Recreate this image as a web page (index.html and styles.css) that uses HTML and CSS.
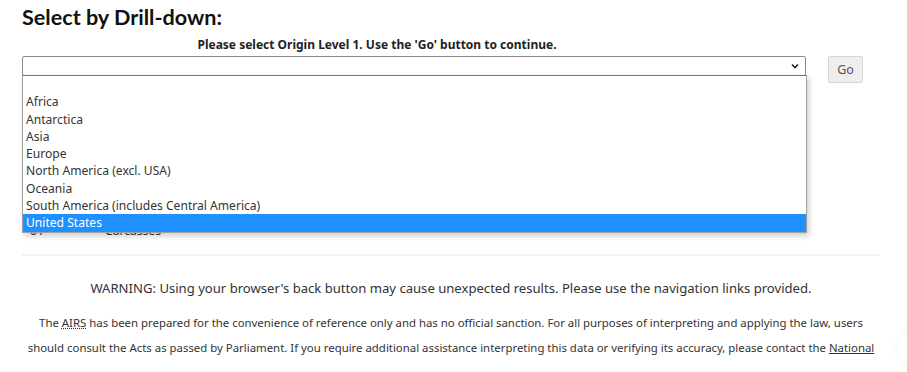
FILE: index.html
```html
<html>
 <head>
  <title>Select by Drill-down</title>
  <meta name='viewport' content='width=device-width,initial-scale=1.0'>
  <link rel="stylesheet" href="styles.css">
 </head>
 <body>
  <div class='page'>
   <h2 class='title'>Select by Drill-down:</h2>
   <p class='prompt'>Please select Origin Level 1. Use the 'Go' button to continue.</p>
   <div class='pick'>
    <div class='select'>
     <svg class='chev' width='8' height='6' viewBox='0 0 8 6'><polyline points='1,1.5 4,4.5 7,1.5' fill='none' stroke='#222' stroke-width='1.6'/></svg>
     <ul class='list'>
      <li>&nbsp;</li>
      <li>Africa</li>
      <li>Antarctica</li>
      <li>Asia</li>
      <li>Europe</li>
      <li>North America (excl. USA)</li>
      <li>Oceania</li>
      <li>South America (includes Central America)</li>
      <li class='sel'>United States</li>
     </ul>
    </div>
    <button class='go'>Go</button>
   </div>
   <div class='codes'>
    <div class='row'><span class='code'>01</span><span>Carcasses</span></div>
   </div>
   <hr class='rule'>
   <p class='warn'>WARNING: Using your browser's back button may cause unexpected results. Please use the navigation links provided.</p>
   <p class='note'>The <abbr title='Automated Import Reference System'>AIRS</abbr> has been prepared for the convenience of reference only and has no official sanction. For all purposes of interpreting and applying the law, users should consult the Acts as passed by Parliament. If you require additional assistance interpreting this data or verifying its accuracy, please contact the <a href='#'>National</a></p>
  </div>
  <div class='totop'></div>
 </body>
</html>
```

FILE: styles.css
```css
body {margin:0; background:#fff; color:#333; font-family:"Noto Sans","Open Sans",sans-serif}
.page {padding:0 27px 0 22px}
.title {margin:0; padding:5px 0 0; font-family:Lato,sans-serif; font-size:21.6px; line-height:24px; font-weight:bold; color:#111}
.prompt {width:710px; margin:8px 0 3px; text-align:center; font-size:12px; line-height:16px; font-weight:bold; color:#222}
.pick {display:flex; align-items:flex-start; gap:22px}
.select {position:relative; width:782px; height:18px; border:1px solid #8a8a8a; border-radius:2px; background:#fff}
.chev {position:absolute; right:6px; top:6px}
.list {position:absolute; left:-1px; top:18px; width:783px; margin:0; padding:0; list-style:none; background:#fff; border:1px solid #a0a0a0; border-top-color:#777; box-shadow:2px 3px 6px #0003; z-index:2}
.list li {height:17.3px; line-height:17.3px; padding:0 0 0 3px; font-size:12.1px; color:#333; white-space:nowrap}
.list .sel {background:#1e90ff; color:#fff}
.go {margin:0; width:35px; height:27px; padding:0; border:1px solid #d6d6d6; border-radius:2px; background:#eee; color:#555; font-family:"Noto Sans",sans-serif; font-size:12.5px}
.codes {padding:140px 0 0 8px; height:20px}
.row {display:flex; font-size:12.1px; line-height:16px; color:#333}
.code {width:75px}
.rule {margin:11px 0 0; border:none; border-top:2px solid #f3f3f3}
.warn {margin:23px 0 0; text-align:center; font-size:13.1px; line-height:18px}
.note {margin:13px 0 0; text-align:center; font-size:11.4px; line-height:25px}
abbr {text-decoration:underline dotted; color:#333}
a {color:#333; text-decoration:underline}
.totop {position:fixed; right:-34px; bottom:2px; width:44px; height:44px; border-radius:50%; background:#fff; box-shadow:0 0 6px #0001}
```
